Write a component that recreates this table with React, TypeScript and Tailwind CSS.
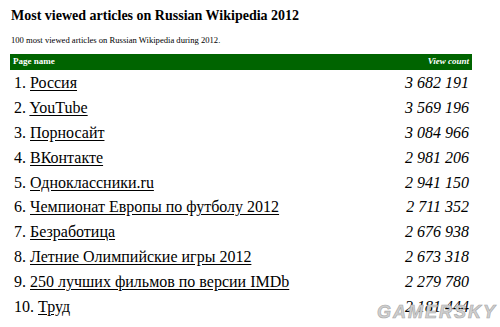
import React from 'react';

const rows: [string, string][] = [
  ['Россия', '3 682 191'],
  ['YouTube', '3 569 196'],
  ['Порносайт', '3 084 966'],
  ['ВКонтакте', '2 981 206'],
  ['Одноклассники.ru', '2 941 150'],
  ['Чемпионат Европы по футболу 2012', '2 711 352'],
  ['Безработица', '2 676 938'],
  ['Летние Олимпийские игры 2012', '2 673 318'],
  ['250 лучших фильмов по версии IMDb', '2 279 780'],
  ['Труд', '2 181 444'],
];

export default function App() {
  return (
    <div className="relative w-[500px] h-[327px] overflow-hidden bg-white text-black font-['Liberation_Serif',serif]">
      <div className="pl-[11px] pt-[6px]">
        <h1 className="text-[14px] font-bold leading-[20px]">Most viewed articles on Russian Wikipedia 2012</h1>
        <p className="mt-[8px] text-[8.6px] leading-[12px]">100 most viewed articles on Russian Wikipedia during 2012.</p>
      </div>
      <div className="ml-[10px] mt-[8px] w-[462px]">
        <div className="flex justify-between bg-[#006400] text-white text-[9px] font-bold h-[16px] items-center px-[3px]">
          <span>Page name</span>
          <span className="italic">View count</span>
        </div>
        <div className="pt-[1px]">
          {rows.map(([name, count], i) => (
            <div key={i} className="flex justify-between items-center h-[24.8px] text-[16px] pl-[4px] pr-[3px]">
              <span>
                {i + 1}. <span className="underline underline-offset-[2px]">{name}</span>
              </span>
              <span className="italic">{count}</span>
            </div>
          ))}
        </div>
      </div>
      <div className="absolute right-[3px] bottom-[6px] text-[18px] leading-[17px] font-black italic tracking-[2px] text-[#d0d0d0] font-['Liberation_Sans',sans-serif] [-webkit-text-stroke:0.6px_#a8a8a8]">
        GAMERSKY
      </div>
    </div>
  );
}
